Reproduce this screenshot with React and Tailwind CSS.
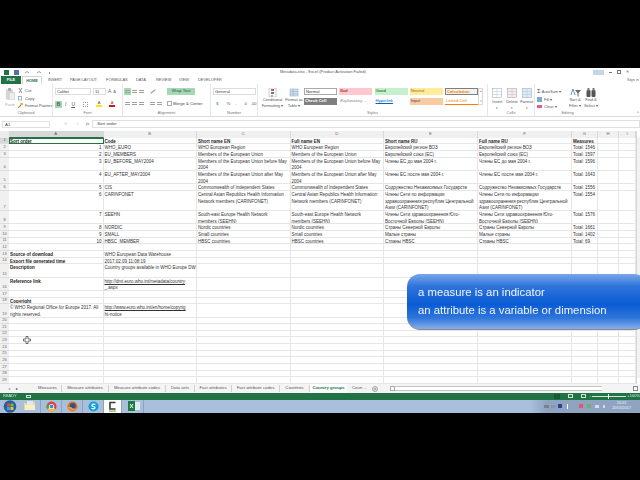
import React from 'react';

const rows = [
  ['Sort order', 'Code', 'Short name EN', 'Full name EN', 'Short name RU', 'Full name RU', 'Measures'],
  ['1', 'WHO_EURO', 'WHO European Region', 'WHO European Region', 'Европейский регион ВОЗ', 'Европейский регион ВОЗ', 'Total: 1546'],
  ['2', 'EU_MEMBERS', 'Members of the European Union', 'Members of the European Union', 'Европейский союз (ЕС)', 'Европейский союз (ЕС)', 'Total: 1597'],
  ['3', 'EU_BEFORE_MAY2004', 'Members of the European Union before May\n2004', 'Members of the European Union before May\n2004', 'Члены ЕС до мая 2004 г.', 'Члены ЕС до мая 2004 г.', 'Total: 1596'],
  ['4', 'EU_AFTER_MAY2004', 'Members of the European Union after May\n2004', 'Members of the European Union after May\n2004', 'Члены ЕС после мая 2004 г.', 'Члены ЕС после мая 2004 г.', 'Total: 1643'],
  ['5', 'CIS', 'Commonwealth of Independent States', 'Commonwealth of Independent States', 'Содружество Независимых Государств', 'Содружество Независимых Государств', 'Total: 1556'],
  ['6', 'CARINFONET', 'Central Asian Republics Health Information\nNetwork members (CARINFONET)', 'Central Asian Republics Health Information\nNetwork members (CARINFONET)', 'Члены Сети по информации\nздравоохранения республик Центральной\nАзии (CARINFONET)', 'Члены Сети по информации\nздравоохранения республик Центральной\nАзии (CARINFONET)', 'Total: 1554'],
  ['7', 'SEEHN', 'South-east Europe Health Network\nmembers (SEEHN)', 'South-east Europe Health Network\nmembers (SEEHN)', 'Члены Сети здравоохранения Юго-\nВосточной Европы (SEEHN)', 'Члены Сети здравоохранения Юго-\nВосточной Европы (SEEHN)', 'Total: 1576'],
  ['8', 'NORDIC', 'Nordic countries', 'Nordic countries', 'Страны Северной Европы', 'Страны Северной Европы', 'Total: 1661'],
  ['9', 'SMALL', 'Small countries', 'Small countries', 'Малые страны', 'Малые страны', 'Total: 1402'],
  ['10', 'HBSC_MEMBER', 'HBSC countries', 'HBSC countries', 'Страны HBSC', 'Страны HBSC', 'Total: 69'],
  [],
  ['Source of download', 'WHO European Data Warehouse'],
  ['Export file generated time', '2017.02.09 11:08:19'],
  ['Description', 'Country groups available in WHO Europe DW'],
  ['Reference link', 'http://dmt.euro.who.int/metadata/country\n_.aspx'],
  [],
  ['Copyright'],
  ['© WHO Regional Office for Europe 2017. All\nrights reserved.', 'http://www.euro.who.int/en/home/copyrig\nht-notice'],
  [], [], [], [], [], [], [], [], [], [],
];

const letters = ['A', 'B', 'C', 'D', 'E', 'F', 'G', 'H', 'I'];
const tabs = [
  ['Measures', 'w-[28px]'],
  ['Measure attributes', 'w-[47px]'],
  ['Measure attribute codes', 'w-[57px]'],
  ['Data sets', 'w-[29px]'],
  ['Fact attributes', 'w-[37px]'],
  ['Fact attribute codes', 'w-[48px]'],
  ['Countries', 'w-[30px]'],
];
const boldLabels = ['Source of download', 'Export file generated time', 'Description', 'Reference link', 'Copyright'];

const Sheet = () => (
  <div className="flex h-[253.67px] bg-white">
    <div className="grid w-[636px] grid-cols-[9px_94.5px_93.5px_93.5px_93.5px_94px_94px_26px_21px_17px] grid-rows-[7px_6.67px_6.67px_6.67px_13.33px_13.33px_6.67px_20px_13.33px_6.67px_6.67px_6.67px_6.67px_6.67px_6.67px_13.33px_13.33px_6.67px_6.67px_13.33px_6.67px_6.67px_6.67px_6.67px_6.67px_6.67px_6.67px_6.67px_6.67px_6.67px]">
      <div className="bg-[#ececec]" />
      {letters.map((l, i) => (
        <div key={l} className={`flex items-center justify-center border-r border-[#d8d8d8] text-[4.2px] ${i === 0 ? 'border-b border-b-[#217346] bg-[#d8d8d8] text-[#217346]' : 'bg-[#f0f0f0] text-[#666]'}`}>{l}</div>
      ))}
      {rows.map((row, r) => (
        <React.Fragment key={r}>
          <div className={`flex items-end justify-center border-b border-[#dedede] text-[4px] leading-[6px] ${r === 0 ? 'bg-[#d8d8d8] text-[#217346]' : 'bg-[#f0f0f0] text-[#666]'}`}>{r + 1}</div>
          {letters.map((l, c) => {
            const text = row[c];
            const isNumber = c === 0 && /^\d+$/.test(text || '');
            const bold = r === 0 || (c === 0 && boldLabels.includes(text));
            const link = c === 1 && text && text.startsWith('http');
            return (
              <div
                key={l}
                className={`overflow-hidden whitespace-pre border-r border-b border-[#e6e6e6] px-[1px] pt-[1px] text-[4.5px] leading-[6.67px] ${isNumber ? 'text-right' : ''} ${bold ? 'font-bold text-[#222]' : 'text-[#333]'} ${link ? 'underline' : ''} ${r === 0 && c === 0 ? 'outline outline-1 -outline-offset-1 outline-[#217346]' : ''}`}
              >
                {text}
              </div>
            );
          })}
        </React.Fragment>
      ))}
    </div>
    <div className="flex w-[4px] flex-col justify-between border-l border-[#d8d8d8] bg-[#f2f2f2]">
      <div className="h-[6px] bg-white" />
      <div className="h-[6px] bg-white" />
    </div>
  </div>
);

const TitleBar = () => (
  <div className="flex h-[8px] items-center bg-white pl-[4px] text-[4px] text-[#555]">
    <svg width="46" height="7" viewBox="0 0 46 7">
      <rect x="0" y="1" width="5" height="5" fill="#217346" />
      <rect x="10" y="1" width="5" height="5" fill="#5a6fa5" />
      <path d="M21 4 q2 -3 4 0 M33 4 q2 -3 4 0" stroke="#9a9a9a" strokeWidth="1" fill="none" />
      <rect x="45" y="3" width="1" height="2" fill="#888" />
    </svg>
    <div className="ml-[230px] w-[86px] whitespace-nowrap">Metadata.xlsx - Excel (Product Activation Failed)</div>
    <div className="ml-[227px] flex items-center gap-[5px]">
      <div className="h-[5px] w-[11px] bg-[#c5d6ea]" />
      <div className="h-[1px] w-[3px] bg-[#777]" />
      <div className="h-[4px] w-[4px] border border-[#777]" />
      <div className="text-[#555]">✕</div>
    </div>
  </div>
);

const menu = [
  ['INSERT', 'ml-[6px] w-[12px]'],
  ['PAGE LAYOUT', 'ml-[10px] w-[26px]'],
  ['FORMULAS', 'ml-[10px] w-[20px]'],
  ['DATA', 'ml-[10px] w-[10px]'],
  ['REVIEW', 'ml-[10px] w-[14px]'],
  ['VIEW', 'ml-[9px] w-[9px]'],
  ['DEVELOPER', 'ml-[10px] w-[21px]'],
];

const MenuBar = () => (
  <div className="flex h-[8px] items-center bg-white pl-[1px] text-[3.9px] text-[#555]">
    <div className="flex h-[8px] w-[20px] items-center justify-center bg-[#217346] font-bold text-white">FILE</div>
    <div className="ml-[1px] flex h-[8px] w-[20px] items-center justify-center border-x border-t border-[#d4d4d4] font-bold text-[#217346]">HOME</div>
    {menu.map(([m, cls]) => <div key={m} className={`${cls} whitespace-nowrap`}>{m}</div>)}
    <div className="ml-auto pr-[1px] text-[#666]">Sign in</div>
  </div>
);

const Group = ({ label, className, children }) => (
  <div className={`flex h-[32px] flex-col border-r border-[#e6e6e6] ${className}`}>
    <div className="h-[25.5px] pt-[4px]">{children}</div>
    <div className="text-center text-[4px] leading-[5px] text-[#777]">{label}</div>
  </div>
);

const Bars = ({ active }) => (
  <div className={`flex h-[7px] w-[7px] flex-col justify-center gap-[1px] px-[1px] ${active ? 'bg-[#a3d9b5]' : ''}`}>
    <div className="h-[1px] bg-[#a0a0a0]" />
    <div className="h-[1px] bg-[#a0a0a0]" />
  </div>
);

const Clipboard = () => (
  <Group label="Clipboard" className="w-[53px]">
    <div className="flex">
      <div className="ml-[5px] w-[13px]">
        <svg width="10" height="12" viewBox="0 0 10 13">
          <rect x="0.5" y="1.5" width="8" height="11" fill="#d6d6d6" />
          <rect x="3" y="0" width="3" height="3" fill="#a8a8a8" />
          <rect x="4" y="5" width="6" height="8" fill="#ededed" stroke="#bdbdbd" strokeWidth="0.5" />
        </svg>
        <div className="mt-[2px] text-[3.9px] leading-[5px] text-[#aaa]">Paste</div>
      </div>
      <div className="-mt-[1px] text-[4.1px] leading-[7.5px] text-[#555]">
        <div className="flex items-center gap-[2px]">
          <svg width="5" height="5" viewBox="0 0 5 5"><path d="M1 0 L4 5 M4 0 L1 5" stroke="#777" strokeWidth="0.8" /></svg>
          Cut
        </div>
        <div className="flex items-center gap-[2px]">
          <svg width="5" height="5" viewBox="0 0 5 5"><rect x="0.5" y="0.5" width="3" height="3.5" fill="#fff" stroke="#7a9cc6" strokeWidth="0.7" /></svg>
          Copy
        </div>
        <div className="flex items-center gap-[2px] whitespace-nowrap">
          <svg width="5" height="5" viewBox="0 0 5 5"><path d="M0 5 L3 2" stroke="#c98a2b" strokeWidth="1.2" /><rect x="2.5" y="0" width="2.5" height="2" fill="#e2b04a" /></svg>
          Format Painter
        </div>
      </div>
    </div>
  </Group>
);

const Font = () => (
  <Group label="Font" className="w-[70px]">
    <div className="flex items-center pl-[2px]">
      <div className="h-[7px] w-[36px] border border-[#dcdcdc] pl-[1px] text-[4.2px] leading-[5px] text-[#444]">Calibri</div>
      <div className="ml-[2px] h-[7px] w-[13px] border border-[#dcdcdc] pl-[1px] text-[4.2px] leading-[5px] text-[#444]">11</div>
      <div className="ml-[2px] text-[5px] text-[#666]">A</div>
      <div className="ml-[2px] text-[4px] text-[#666]">A</div>
    </div>
    <div className="mt-[5px] flex items-center pl-[2px] text-[5px] leading-[7px] text-[#555]">
      <div className="h-[7px] w-[7px] bg-[#a3d9b5] text-center font-bold">B</div>
      <div className="ml-[3px] italic">I</div>
      <div className="ml-[5px] underline">U</div>
      <div className="ml-[8px] h-[5px] w-[5px] border border-dotted border-[#999]" />
      <div className="ml-[8px] flex flex-col items-center text-[4px] leading-[4px]">
        <span>A</span>
        <div className="h-[1.5px] w-[6px] bg-[#ffe600]" />
      </div>
      <div className="ml-[7px] flex flex-col items-center text-[4px] leading-[4px]">
        <span>A</span>
        <div className="h-[1.5px] w-[6px] bg-[#e01010]" />
      </div>
    </div>
  </Group>
);

const Alignment = () => (
  <Group label="Alignment" className="w-[88px]">
    <div className="flex items-center pl-[1px]">
      <Bars active />
      <Bars />
      <Bars />
      <div className="ml-[5px] h-[1px] w-[6px] rotate-[-40deg] bg-[#888]" />
      <div className="ml-[11px] flex h-[7px] w-[28px] items-center justify-center whitespace-nowrap bg-[#a3d9b5] text-[4.2px] text-[#444]">Wrap Text</div>
    </div>
    <div className="mt-[5px] flex items-center pl-[1px]">
      <Bars />
      <Bars />
      <Bars />
      <div className="ml-[4px]"><Bars /></div>
      <Bars />
      <div className="ml-[4px] flex items-center gap-[1px] whitespace-nowrap text-[4.2px] leading-[7px] text-[#444]">
        <div className="h-[5px] w-[5px] border border-[#aaa]" />
        Merge &amp; Center
      </div>
    </div>
  </Group>
);

const NumberGroup = () => (
  <Group label="Number" className="w-[47px]">
    <div className="ml-[2px] h-[7px] w-[43px] border border-[#dcdcdc] pl-[1px] text-[4.2px] leading-[5px] text-[#444]">General</div>
    <div className="mt-[5px] flex pl-[5px] text-[4.4px] leading-[7px] text-[#555]">
      <span className="text-[#4a7fb5]">$</span>
      <span className="ml-[8px]">%</span>
      <span className="ml-[5px]">,</span>
      <span className="ml-[7px] text-[4px]">.0</span>
      <span className="ml-[4px] text-[4px]">.00</span>
    </div>
  </Group>
);

const cellStyles = [
  ['Normal', 'border border-[#a9a9a9] bg-white text-[#333]'],
  ['Bad', 'bg-[#ffc7ce] text-[#9c0006]'],
  ['Good', 'bg-[#c6efce] text-[#006100]'],
  ['Neutral', 'bg-[#ffeb9c] text-[#9c6500]'],
  ['Calculation', 'border border-[#7f7f7f] bg-[#f2f2f2] font-bold text-[#fa7d00]'],
  ['Check Cell', 'bg-[#7f7f7f] font-bold text-white'],
  ['Explanatory ...', 'text-[#7f7f7f] italic'],
  ['Hyperlink', 'text-[#0563c1] underline'],
  ['Input', 'bg-[#f8cba0] text-[#3f3f76]'],
  ['Linked Cell', 'border-b border-[#fa7d00] text-[#fa7d00]'],
];

const Styles = () => (
  <Group label="Styles" className="w-[230px]">
    <div className="flex">
      <div className="flex w-[26px] flex-col items-center pl-[3px]">
        <svg width="10" height="9" viewBox="0 0 10 9">
          <rect x="1" y="0" width="7" height="9" fill="#fff" stroke="#9a9a9a" strokeWidth="0.5" />
          <rect x="3" y="1" width="3" height="2" fill="#d9534f" />
          <rect x="3" y="4" width="3" height="2" fill="#4a7fb5" />
          <rect x="3" y="7" width="2" height="2" fill="#e8a33a" />
        </svg>
        <div className="whitespace-nowrap text-center text-[3.9px] leading-[5.5px] text-[#555]">Conditional<br />Formatting ▾</div>
      </div>
      <div className="flex w-[20px] flex-col items-center">
        <svg width="10" height="9" viewBox="0 0 10 9">
          <rect x="1" y="1" width="8" height="7" fill="#cfe0f0" stroke="#8aa5c4" strokeWidth="0.5" />
          <path d="M1 3.5 H9 M1 6 H9 M4 1 V8" stroke="#8aa5c4" strokeWidth="0.5" />
        </svg>
        <div className="whitespace-nowrap text-center text-[3.9px] leading-[5.5px] text-[#555]">Format as<br />Table ▾</div>
      </div>
      <div className="grid grid-cols-[repeat(5,33px)] grid-rows-[7px_7px] gap-x-[2.25px] gap-y-[3px]">
        {cellStyles.map(([name, cls]) => (
          <div key={name} className={`truncate pl-[1px] text-[4.2px] leading-[6px] ${cls}`}>{name}</div>
        ))}
      </div>
      <div className="flex h-[17px] w-[5px] flex-col justify-between border border-[#d8d8d8] text-center text-[3px] leading-[5px] text-[#888]">
        <span>▴</span><span>▾</span>
      </div>
    </div>
  </Group>
);

const CellBtn = ({ label, fill }) => (
  <div className="flex w-[15px] flex-col items-center text-[4px] leading-[6px] text-[#555]">
    <svg width="10" height="10" viewBox="0 0 10 10">
      <rect x="0.5" y="0.5" width="9" height="9" fill={fill} stroke="#8aa5c4" strokeWidth="0.5" />
      <path d="M0.5 3.5 H9.5 M0.5 6.5 H9.5 M5 0.5 V9.5" stroke="#b5c5d8" strokeWidth="0.5" />
    </svg>
    <div className="mt-[1px]">{label}</div>
    <div className="text-[3px]">▾</div>
  </div>
);

const Cells = () => (
  <Group label="Cells" className="w-[47px]">
    <div className="flex pl-[2px]">
      <CellBtn label="Insert" fill="#fff" />
      <CellBtn label="Delete" fill="#fde8e4" />
      <CellBtn label="Format" fill="#dfeaf6" />
    </div>
  </Group>
);

const Editing = () => (
  <Group label="Editing" className="w-[65px] border-r-0">
    <div className="flex">
      <div className="w-[32px] pl-[2px] text-[4px] leading-[7.5px] text-[#555]">
        <div className="flex items-center gap-[1px] whitespace-nowrap"><span className="text-[6px] leading-[7px]">Σ</span> AutoSum ▾</div>
        <div className="flex items-center gap-[2px]"><div className="h-[5px] w-[5px] bg-[#7fa7d4]" /> Fill ▾</div>
        <div className="flex items-center gap-[2px]"><div className="h-[3px] w-[5px] bg-[#d9637d]" /> Clear ▾</div>
      </div>
      <div className="flex w-[16px] flex-col items-center text-center text-[4px] leading-[5.5px] text-[#555]">
        <svg width="11" height="9" viewBox="0 0 11 9">
          <path d="M1 7 L3 1 L5 7" stroke="#4a7fb5" strokeWidth="0.8" fill="none" />
          <path d="M5 2 H11 L8.5 5 V9 L7.5 8 V5 Z" fill="#666" />
        </svg>
        <div className="whitespace-nowrap">Sort &amp;<br />Filter ▾</div>
      </div>
      <div className="flex w-[16px] flex-col items-center text-center text-[4px] leading-[5.5px] text-[#555]">
        <svg width="10" height="9" viewBox="0 0 10 9">
          <rect x="0.5" y="2" width="4" height="7" rx="1" fill="#555" />
          <rect x="5.5" y="2" width="4" height="7" rx="1" fill="#555" />
          <rect x="1.5" y="0" width="2" height="3" fill="#777" />
          <rect x="6.5" y="0" width="2" height="3" fill="#777" />
        </svg>
        <div className="whitespace-nowrap">Find &amp;<br />Select ▾</div>
      </div>
    </div>
  </Group>
);

const Ribbon = () => (
  <div className="flex h-[33px] border-b border-[#dcdcdc] bg-white">
    <Clipboard />
    <Font />
    <Alignment />
    <NumberGroup />
    <Styles />
    <Cells />
    <Editing />
    <div className="ml-auto flex items-end pr-[1px] text-[4px] text-[#666]">^</div>
  </div>
);

const FormulaBar = () => (
  <div className="h-[13.67px] bg-white pt-[3px]">
    <div className="flex h-[8px] items-center text-[4.4px] text-[#444]">
      <div className="ml-[2px] h-[7px] w-[48px] border border-[#e0e0e0] pl-[2px] leading-[5px]">A1</div>
      <div className="ml-[14px] text-[#bbb]">✕</div>
      <div className="ml-[9px] text-[#bbb]">✓</div>
      <div className="ml-[7px] font-['Liberation_Serif',serif] italic text-[#666]">fx</div>
      <div className="ml-[3px] h-[8px] flex-1 border border-[#e0e0e0] pl-[4px] leading-[6px]">Sort order</div>
    </div>
  </div>
);

const TabBar = () => (
  <div className="flex h-[8.67px] items-center bg-[#f4f4f4] text-[4.3px] text-[#555]">
    <div className="flex w-[34px] items-center gap-[6px] pl-[8px] text-[4px] text-[#999]">
      <span>◂</span><span className="text-[#444]">▸</span>
    </div>
    {tabs.map(([t, w]) => (
      <div key={t} className={`${w} whitespace-nowrap border-r border-[#d0d0d0] text-center`}>{t}</div>
    ))}
    <div className="h-[8.67px] w-[37px] whitespace-nowrap bg-white text-center font-bold leading-[8px] text-[#217346]">Country groups</div>
    <div className="w-[20px] whitespace-nowrap pl-[5px]">Coun ...</div>
    <svg className="ml-[5px]" width="6" height="6" viewBox="0 0 6 6">
      <circle cx="3" cy="3" r="2.5" fill="none" stroke="#777" strokeWidth="0.6" />
      <path d="M3 1.5 V4.5 M1.5 3 H4.5" stroke="#777" strokeWidth="0.6" />
    </svg>
    <div className="ml-[12px] h-[5px] w-[5px] border border-[#aaa] bg-white" />
    <div className="h-[5px] w-[207px] border-y border-[#c4c4c4] bg-white" />
    <div className="h-[5px] flex-1" />
    <div className="mr-[2px] h-[5px] w-[5px] border border-[#888] bg-white" />
  </div>
);

const StatusBar = () => (
  <div className="flex h-[7px] items-center bg-[#217346] pl-[3px] text-[4px] text-[#dcebe2]">
    <span>READY</span>
    <div className="ml-[9px] h-[3px] w-[5px] border border-[#cfe3d7]" />
    <div className="ml-[523px] h-[5px] w-[6px] bg-[#175a36]" />
    <div className="ml-[8px] h-[4px] w-[5px] border border-[#cfe3d7]" />
    <div className="ml-[8px] h-[4px] w-[5px] border border-[#cfe3d7]" />
    <span className="ml-[4px]">-</span>
    <div className="relative ml-[1px] h-[1px] w-[34px] bg-[#cfe3d7]">
      <div className="absolute left-[16px] top-[-2px] h-[5px] w-[1px] bg-white" />
    </div>
    <span className="ml-[1px]">+</span>
    <span className="ml-auto whitespace-nowrap">100%</span>
  </div>
);

const Orb = () => (
  <svg width="14" height="13" viewBox="0 0 14 13">
    <circle cx="7" cy="6.5" r="6.3" fill="#2a5f9e" />
    <rect x="4" y="3.5" width="3" height="3" fill="#d9533a" />
    <rect x="7.5" y="3.5" width="3" height="3" fill="#7fb83e" />
    <rect x="4" y="7" width="3" height="3" fill="#3d9fe0" />
    <rect x="7.5" y="7" width="3" height="3" fill="#f0c030" />
  </svg>
);

const TaskBtn = ({ className, children }) => (
  <div className={`flex h-[13px] items-center justify-center border-r border-[#8ea2bd] ${className}`}>{children}</div>
);

const Taskbar = () => (
  <div className="flex h-[13px] items-center bg-[#aabfdb]">
    <div className="ml-[3px] w-[17px]"><Orb /></div>
    <TaskBtn className="w-[21px]">
      <svg width="12" height="10" viewBox="0 0 12 10">
        <path d="M0 2 H5 L6 1 H11 V9 H0 Z" fill="#f1d98a" />
        <rect x="1" y="4" width="10" height="5" fill="#f9efc4" />
        <rect x="3" y="0" width="6" height="4" fill="#dfe8f0" />
      </svg>
    </TaskBtn>
    <TaskBtn className="w-[21px]">
      <svg width="11" height="11" viewBox="0 0 11 11">
        <circle cx="5.5" cy="5.5" r="5" fill="#e0453a" />
        <path d="M5.5 5.5 L1.2 8 A5 5 0 0 1 1.2 3 Z" fill="#3fa74f" />
        <path d="M5.5 5.5 L1.2 8 A5 5 0 0 0 9.8 8 Z" fill="#f2c230" />
        <circle cx="5.5" cy="5.5" r="2.6" fill="#fff" />
        <circle cx="5.5" cy="5.5" r="1.9" fill="#4a88e0" />
      </svg>
    </TaskBtn>
    <TaskBtn className="w-[21px]">
      <svg width="11" height="11" viewBox="0 0 11 11">
        <circle cx="5.5" cy="5.5" r="5" fill="#e8701f" />
        <circle cx="5.8" cy="5" r="3" fill="#2f4f95" />
        <path d="M1 6 A5 5 0 0 0 10 7 Q6 9 4 6 Z" fill="#f2a42c" />
      </svg>
    </TaskBtn>
    <TaskBtn className="w-[21px]">
      <svg width="11" height="11" viewBox="0 0 11 11">
        <circle cx="5.5" cy="5.5" r="5" fill="#0d9fe0" />
        <path d="M7.5 3.5 Q5 2.5 4 4 Q3.5 5.5 5.5 5.5 Q7.5 6 6.8 7.2 Q5.5 8.3 3.5 7.3" stroke="#fff" strokeWidth="1.2" fill="none" />
      </svg>
    </TaskBtn>
    <TaskBtn className="w-[18px] bg-white">
      <svg width="9" height="11" viewBox="0 0 9 11">
        <path d="M7.5 1.5 H2 V8 H7.5" stroke="#3a3a3a" strokeWidth="1.6" fill="none" />
        <rect x="1" y="9.5" width="7" height="1.2" fill="#7fb83e" />
      </svg>
    </TaskBtn>
    <TaskBtn className="ml-[2px] w-[20px]">
      <svg width="12" height="10" viewBox="0 0 12 10">
        <rect x="5" y="1" width="7" height="8" fill="#dfeee4" />
        <rect x="0" y="0" width="7" height="10" fill="#1f7a45" />
        <path d="M2 3 L5 7 M5 3 L2 7" stroke="#fff" strokeWidth="1" />
      </svg>
    </TaskBtn>
    <div className="ml-auto flex h-[13px] w-[110px] items-center bg-[linear-gradient(90deg,#aabfdb,#8fa4c0_15%,#8fa4c0)] pl-[14px]">
      <div className="h-[3px] w-[5px] bg-[#777f90]" />
      <div className="ml-[2px] h-[3px] w-[5px] bg-[#8c96a8]" />
      <div className="ml-[2px] h-[4px] w-[4px] bg-[#28429a]" />
      <div className="ml-[5px] h-[5px] w-[1px] bg-white" />
      <div className="ml-[11px] h-[4px] w-[4px] bg-[#e05a6a]" />
      <div className="ml-[4px] h-[4px] w-[4px] bg-[#6fae6f]" />
      <div className="ml-[4px] h-[3px] w-[4px] bg-[#d8dde5]" />
      <div className="ml-[4px] h-[3px] w-[2px] bg-[#d8dde5]" />
      <div className="ml-[7px] whitespace-nowrap text-center text-[3.8px] leading-[5px] text-[#eef2f8]">16:05<br />20/03/2017</div>
    </div>
  </div>
);

const App = () => (
  <div className="relative h-[480px] w-[640px] overflow-hidden bg-black font-['Liberation_Sans',sans-serif]">
    <div className="pt-[68px] blur-[0.3px]">
      <TitleBar />
      <MenuBar />
      <Ribbon />
      <FormulaBar />
      <Sheet />
      <TabBar />
      <StatusBar />
      <Taskbar />
    </div>

    {/* cell cursor */}
    <svg className="absolute left-[23px] top-[336px]" width="8" height="8" viewBox="0 0 8 8">
      <path d="M3 0.5 H5 V3 H7.5 V5 H5 V7.5 H3 V5 H0.5 V3 H3 Z" fill="#fff" stroke="#333" strokeWidth="0.7" />
    </svg>

    {/* caption */}
    <div className="absolute left-[407px] top-[274px] h-[56px] w-[240px] rounded-[13px] border-b border-b-[#8a8a8a] bg-[linear-gradient(180deg,#7aa7ea_0%,#2f74dc_22%,#0a5bd3_55%,#2f76dc_80%,#86aeea_100%)] pl-[11px] pt-[9px] text-[11.35px] leading-[18px] text-[#f2f6ff]">
      <div>a measure is an indicator</div>
      <div>an attribute is a variable or dimension</div>
    </div>
  </div>
);

export default App;
